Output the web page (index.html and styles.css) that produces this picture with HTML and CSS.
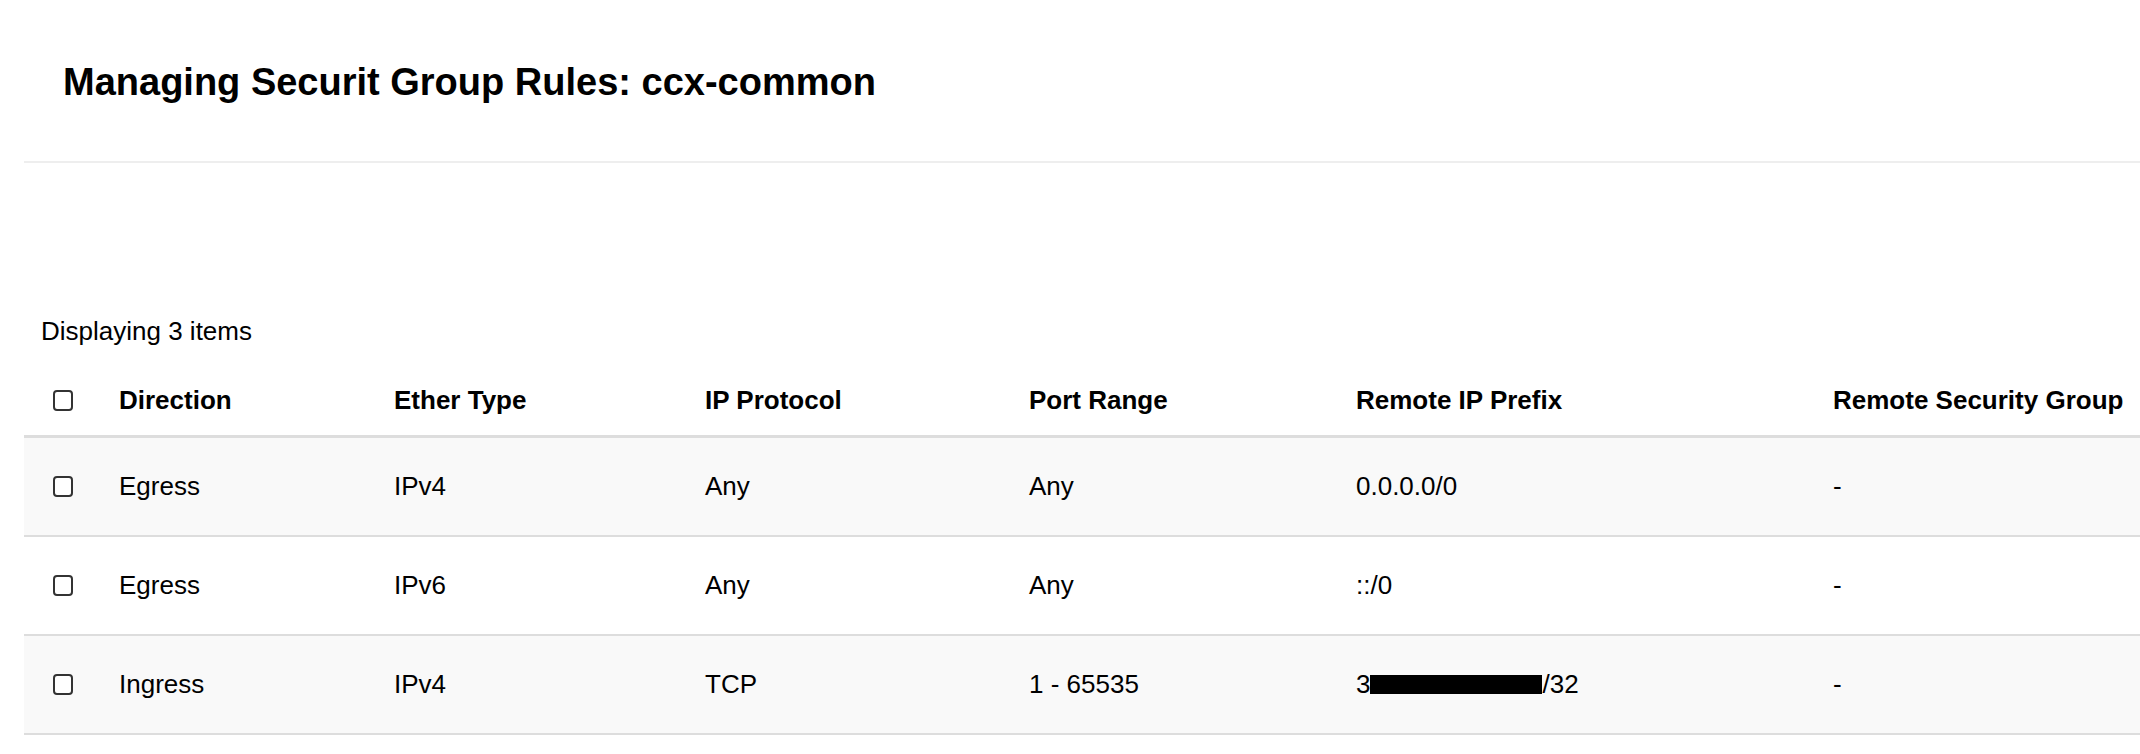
FILE: index.html
```html
<!DOCTYPE html>
<html lang="en">
<head>
<meta charset="utf-8">
<title>Managing Security Group Rules</title>
<link rel="stylesheet" href="styles.css">
</head>
<body>
<div class="page">
  <header class="modal-header">
    <h1 class="modal-title">Managing Securit Group Rules: ccx-common</h1>
  </header>
  <section class="rules">
    <div class="count">Displaying 3 items</div>
    <table class="grid">
      <colgroup>
        <col class="c-check">
        <col class="c-dir">
        <col class="c-ether">
        <col class="c-proto">
        <col class="c-port">
        <col class="c-prefix">
        <col class="c-group">
      </colgroup>
      <thead>
        <tr>
          <th class="check-cell"><span class="checkbox"></span></th>
          <th>Direction</th>
          <th>Ether Type</th>
          <th>IP Protocol</th>
          <th>Port Range</th>
          <th>Remote IP Prefix</th>
          <th>Remote Security Group</th>
        </tr>
      </thead>
      <tbody>
        <tr class="odd">
          <td class="check-cell"><span class="checkbox"></span></td>
          <td>Egress</td>
          <td>IPv4</td>
          <td>Any</td>
          <td>Any</td>
          <td>0.0.0.0/0</td>
          <td>-</td>
        </tr>
        <tr>
          <td class="check-cell"><span class="checkbox"></span></td>
          <td>Egress</td>
          <td>IPv6</td>
          <td>Any</td>
          <td>Any</td>
          <td>::/0</td>
          <td>-</td>
        </tr>
        <tr class="odd">
          <td class="check-cell"><span class="checkbox"></span></td>
          <td>Ingress</td>
          <td>IPv4</td>
          <td>TCP</td>
          <td>1 - 65535</td>
          <td>3<span class="redacted"></span>/32</td>
          <td>-</td>
        </tr>
      </tbody>
    </table>
  </section>
</div>
</body>
</html>
```
FILE: styles.css
```css
html, body {
  margin: 0;
  padding: 0;
  background: #ffffff;
  overflow: hidden;
}

body {
  font-family: "Liberation Sans", Arial, Helvetica, sans-serif;
  color: #000000;
}

.page {
  padding-left: 24px;
}

.modal-header {
  padding: 59px 0 56px 39px;
  border-bottom: 2px solid #eeeeee;
}

.modal-title {
  margin: 0;
  font-size: 38px;
  line-height: 46px;
  font-weight: 700;
}

.rules {
  padding-top: 153px;
}

.count {
  padding-left: 17px;
  font-size: 26px;
  line-height: 30px;
}

.grid {
  margin-top: 22px;
  width: 2116px;
  table-layout: fixed;
  border-collapse: collapse;
  font-size: 26px;
  line-height: 30px;
}

.c-check { width: 95px; }
.c-dir { width: 275px; }
.c-ether { width: 311px; }
.c-proto { width: 324px; }
.c-port { width: 327px; }
.c-prefix { width: 477px; }
.c-group { width: 307px; }

.grid th {
  text-align: left;
  font-weight: 700;
  padding: 17px 0 20px 0;
  border-bottom: 3px solid #dddddd;
  white-space: nowrap;
}

.grid td {
  padding: 33px 0 34px 0;
  border-bottom: 2px solid #dddddd;
  white-space: nowrap;
}

.grid tr.odd td {
  background: #f9f9f9;
}

.grid .check-cell {
  padding-left: 29px;
}

.checkbox {
  display: inline-block;
  width: 16px;
  height: 17px;
  border: 2px solid #333333;
  border-radius: 4px;
  vertical-align: -2px;
  background: #ffffff;
}

.redacted {
  display: inline-block;
  width: 172px;
  height: 19px;
  background: #000000;
  vertical-align: -1px;
}
```
